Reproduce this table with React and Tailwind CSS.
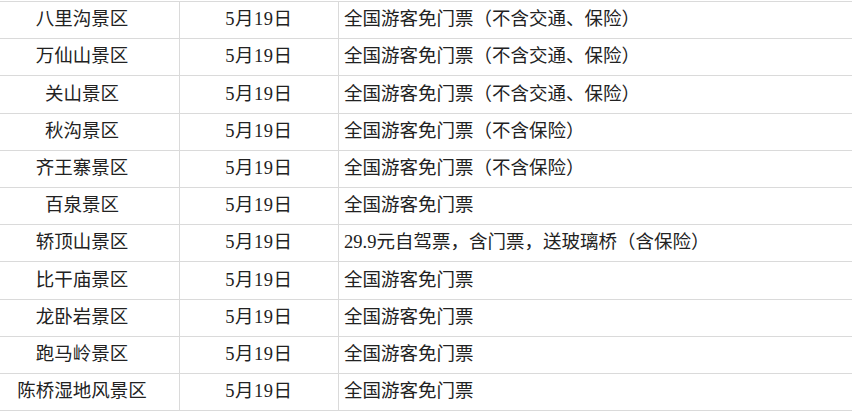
const ROWS = [
  ['八里沟景区', '5月19日', '全国游客免门票（不含交通、保险）'],
  ['万仙山景区', '5月19日', '全国游客免门票（不含交通、保险）'],
  ['关山景区', '5月19日', '全国游客免门票（不含交通、保险）'],
  ['秋沟景区', '5月19日', '全国游客免门票（不含保险）'],
  ['齐王寨景区', '5月19日', '全国游客免门票（不含保险）'],
  ['百泉景区', '5月19日', '全国游客免门票'],
  ['轿顶山景区', '5月19日', '29.9元自驾票，含门票，送玻璃桥（含保险）'],
  ['比干庙景区', '5月19日', '全国游客免门票'],
  ['龙卧岩景区', '5月19日', '全国游客免门票'],
  ['跑马岭景区', '5月19日', '全国游客免门票'],
  ['陈桥湿地风景区', '5月19日', '全国游客免门票'],
];

export default function App() {
  return (
    <div
      className="w-[852px] h-[415px] overflow-hidden bg-white pt-px text-[18.5px] text-[#222]"
      style={{ fontFamily: '"Liberation Serif", "Noto Sans CJK SC", serif' }}
    >
      <div className="border-t border-[#dadada]">
        {ROWS.map(([name, date, note]) => (
          <div key={name} className="flex h-[37.2px] border-b border-[#dadada]">
            <div className="w-[180px] shrink-0 border-r border-[#dadada] flex items-center justify-center pr-[15px]">
              {name}
            </div>
            <div className="w-[159px] shrink-0 border-r border-[#dadada] flex items-center justify-center tracking-[0.5px]">
              {date}
            </div>
            <div className="flex-1 flex items-center pl-[5px] whitespace-nowrap">{note}</div>
          </div>
        ))}
      </div>
    </div>
  );
}
